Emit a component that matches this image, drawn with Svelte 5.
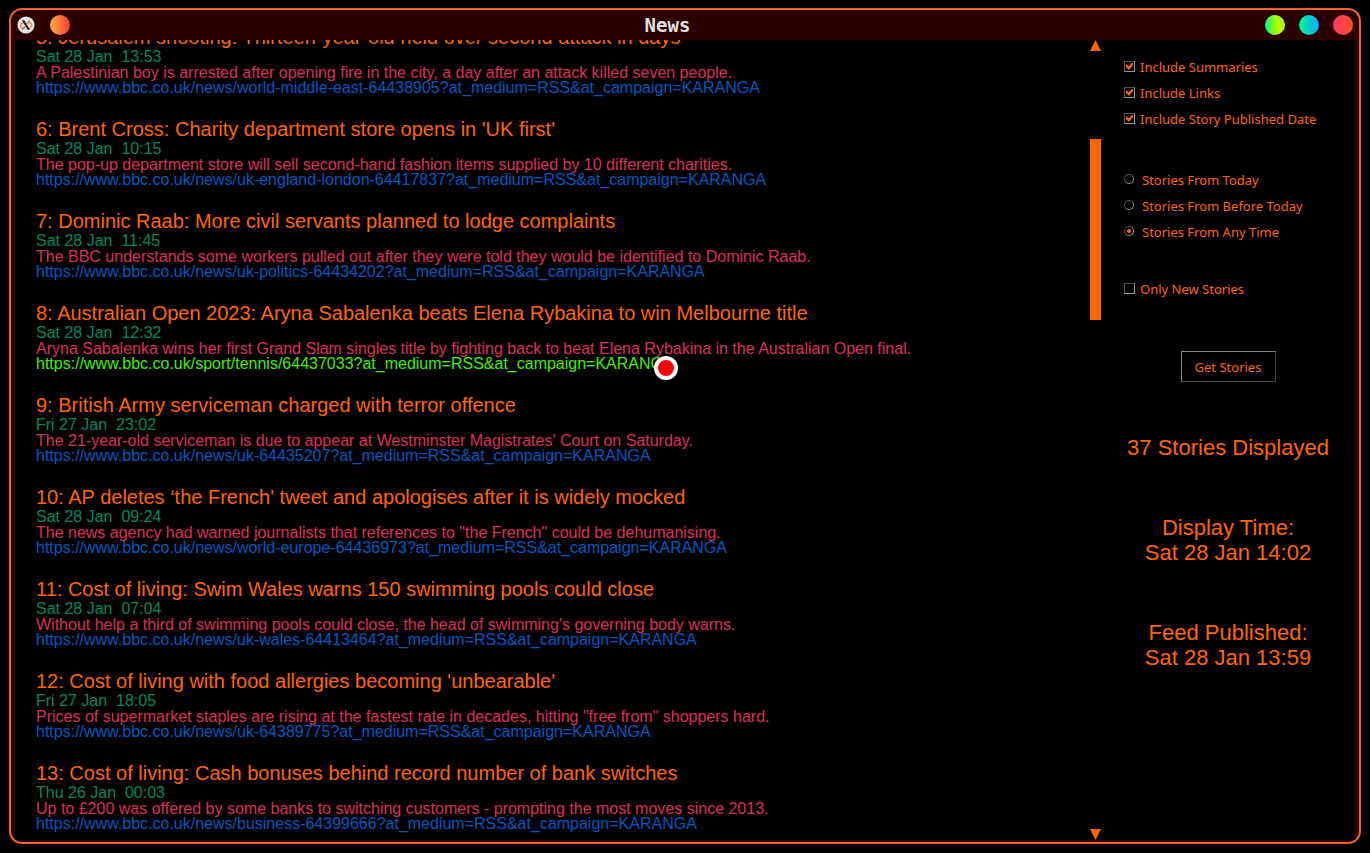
<script>
  const stories = [
    { n: 5, title: 'Jerusalem shooting: Thirteen-year-old held over second attack in days', date: 'Sat 28 Jan  13:53', summary: 'A Palestinian boy is arrested after opening fire in the city, a day after an attack killed seven people.', path: 'news/world-middle-east-64438905' },
    { n: 6, title: "Brent Cross: Charity department store opens in 'UK first'", date: 'Sat 28 Jan  10:15', summary: 'The pop-up department store will sell second-hand fashion items supplied by 10 different charities.', path: 'news/uk-england-london-64417837' },
    { n: 7, title: 'Dominic Raab: More civil servants planned to lodge complaints', date: 'Sat 28 Jan  11:45', summary: 'The BBC understands some workers pulled out after they were told they would be identified to Dominic Raab.', path: 'news/uk-politics-64434202' },
    { n: 8, title: 'Australian Open 2023: Aryna Sabalenka beats Elena Rybakina to win Melbourne title', date: 'Sat 28 Jan  12:32', summary: 'Aryna Sabalenka wins her first Grand Slam singles title by fighting back to beat Elena Rybakina in the Australian Open final.', path: 'sport/tennis/64437033', hovered: true },
    { n: 9, title: 'British Army serviceman charged with terror offence', date: 'Fri 27 Jan  23:02', summary: "The 21-year-old serviceman is due to appear at Westminster Magistrates' Court on Saturday.", path: 'news/uk-64435207' },
    { n: 10, title: "AP deletes ‘the French' tweet and apologises after it is widely mocked", date: 'Sat 28 Jan  09:24', summary: 'The news agency had warned journalists that references to "the French" could be dehumanising.', path: 'news/world-europe-64436973' },
    { n: 11, title: 'Cost of living: Swim Wales warns 150 swimming pools could close', date: 'Sat 28 Jan  07:04', summary: "Without help a third of swimming pools could close, the head of swimming's governing body warns.", path: 'news/uk-wales-64413464' },
    { n: 12, title: "Cost of living with food allergies becoming 'unbearable'", date: 'Fri 27 Jan  18:05', summary: 'Prices of supermarket staples are rising at the fastest rate in decades, hitting "free from" shoppers hard.', path: 'news/uk-64389775' },
    { n: 13, title: 'Cost of living: Cash bonuses behind record number of bank switches', date: 'Thu 26 Jan  00:03', summary: 'Up to £200 was offered by some banks to switching customers - prompting the most moves since 2013.', path: 'news/business-64399666' }
  ];
  const url = (path) => `https://www.bbc.co.uk/${path}?at_medium=RSS&at_campaign=KARANGA`;

  let includes = $state([
    { label: 'Include Summaries', on: true },
    { label: 'Include Links', on: true },
    { label: 'Include Story Published Date', on: true }
  ]);
  const periods = ['Stories From Today', 'Stories From Before Today', 'Stories From Any Time'];
  let period = $state('Stories From Any Time');
  let onlyNew = $state(false);

  const scroll = { before: 88, thumb: 181, after: 509 };
</script>

<div class="window">
  <header>
    <div class="group">
      <button class="logo" aria-label="Window menu">
        <svg viewBox="0 0 18 18" width="18" height="18">
          <circle cx="9" cy="9" r="8.6" fill="#e2e6e8" />
          <path d="M7.4 6.6C4.6 7 3.2 8.6 3.6 10.4c.4 1.8 2.6 2.4 4.6 1.4M10.4 12.2c2.6.2 4.4-1.2 4.3-3.4-.1-1.8-1.6-2.6-3.2-2.2" fill="none" stroke="#f08a58" stroke-width="1.3" />
          <path d="M4.8 4.2h2.5l5.8 9.6h-2.5z" fill="#2a2a2a" />
          <path d="M12.8 4.2 9.9 7.9M8 10.2l-2.9 3.6" stroke="#555" stroke-width="0.9" />
        </svg>
      </button>
      <button class="dot amber" aria-label="Stick"></button>
    </div>
    <h1>News</h1>
    <div class="group right">
      <button class="dot lime" aria-label="Minimise"></button>
      <button class="dot aqua" aria-label="Maximise"></button>
      <button class="dot red" aria-label="Close"></button>
    </div>
  </header>

  <main>
    <section class="feed" aria-label="Stories">
      <div class="stories">
        {#each stories as s (s.n)}
          <article>
            <h2>{s.n}: {s.title}</h2>
            <time>{s.date}</time>
            <p>{s.summary}</p>
            <a class:hovered={s.hovered} href={url(s.path)}>{url(s.path)}{#if s.hovered}<span class="pointer"></span>{/if}</a>
          </article>
        {/each}
      </div>
    </section>

    <div class="scrollbar">
      <button aria-label="Scroll up"><svg viewBox="0 0 11 11" width="11" height="11"><path d="M5.5 0 11 11H0z" fill="#ff6600" /></svg></button>
      <div class="track">
        <div style:flex-grow={scroll.before}></div>
        <div class="thumb" style:flex-grow={scroll.thumb}></div>
        <div style:flex-grow={scroll.after}></div>
      </div>
      <button aria-label="Scroll down"><svg viewBox="0 0 11 11" width="11" height="11"><path d="M0 0h11L5.5 11z" fill="#ff6600" /></svg></button>
    </div>

    <aside>
      <div class="options">
        {#each includes as item}
          <label><input type="checkbox" bind:checked={item.on} />{item.label}</label>
        {/each}
      </div>
      <div class="options radios">
        {#each periods as p}
          <label><input type="radio" name="period" value={p} bind:group={period} />{p}</label>
        {/each}
      </div>
      <div class="options">
        <label><input type="checkbox" bind:checked={onlyNew} />Only New Stories</label>
      </div>
      <button class="get">Get Stories</button>
      <div class="info">
        <p>37 Stories Displayed</p>
        <p>Display Time:<br />Sat 28 Jan 14:02</p>
        <p>Feed Published:<br />Sat 28 Jan 13:59</p>
      </div>
    </aside>
  </main>
</div>

<style>
  :global(body) {
    background: #000;
  }
  :global(#app) {
    height: 100vh;
    box-sizing: border-box;
    padding: 8px 9px 9px;
  }
  * {
    box-sizing: border-box;
    margin: 0;
  }
  button {
    padding: 0;
    border: 0;
    background: none;
  }
  .window {
    height: 100%;
    display: flex;
    flex-direction: column;
    padding: 0 4px 2px;
    border: 2px solid #f4622a;
    border-radius: 13px;
    background: #2a0000;
    color: #ff6600;
    font-family: "Liberation Sans", Arial, sans-serif;
    overflow: hidden;
  }
  header {
    flex: none;
    height: 30px;
    display: grid;
    grid-template-columns: auto 1fr auto;
    align-items: center;
    padding: 0 2px;
  }
  .group {
    display: flex;
    align-items: center;
    gap: 15px;
  }
  .right {
    gap: 14px;
  }
  .logo {
    width: 18px;
    height: 18px;
  }
  svg {
    display: block;
  }
  h1 {
    color: #e0e0e0;
    font: bold 19px/30px "DejaVu Sans Mono", monospace;
    text-align: center;
  }
  .dot {
    width: 20px;
    height: 20px;
    border-radius: 50%;
  }
  .amber { background: linear-gradient(90deg, #ffb040, #f83a30); }
  .lime { background: linear-gradient(90deg, #00ff88, #b0ff00 60%); }
  .aqua { background: linear-gradient(90deg, #00f890, #00a8ff); }
  .red { background: linear-gradient(90deg, #ff3a6c, #ff5020); }
  main {
    flex: 1;
    min-height: 0;
    display: grid;
    grid-template-columns: 1fr 11px 254px;
    background: #000;
  }
  .feed {
    min-height: 0;
    padding-left: 21px;
    overflow: hidden;
  }
  .stories {
    display: flex;
    flex-direction: column;
    gap: 23px;
    margin-top: -14px;
    white-space: pre;
  }
  article {
    display: flex;
    flex-direction: column;
    align-items: flex-start;
    font-size: 16px;
    line-height: 16px;
  }
  h2 {
    font-size: 20px;
    font-weight: normal;
    line-height: 23px;
  }
  time {
    color: #008860;
  }
  article p {
    color: #dc2f58;
  }
  a {
    position: relative;
    color: #0058c0;
    line-height: 14px;
    text-decoration: none;
  }
  .hovered {
    color: #44ee00;
  }
  .pointer {
    position: absolute;
    right: -4px;
    top: -1px;
    width: 24px;
    height: 24px;
    border: 4px solid #fff;
    border-radius: 50%;
    background: #f00;
  }
  .scrollbar {
    display: flex;
    flex-direction: column;
  }
  .track {
    flex: 1;
    display: flex;
    flex-direction: column;
  }
  .thumb {
    background: #ff6600;
  }
  aside {
    display: flex;
    flex-direction: column;
    padding-top: 14px;
  }
  .options {
    margin-bottom: 31px;
    padding-left: 23px;
    font-family: "Noto Sans", sans-serif;
    font-size: 13px;
  }
  .radios {
    margin-top: 4px;
  }
  label {
    display: flex;
    align-items: center;
    gap: 5px;
    height: 26px;
  }
  .radios label {
    gap: 8px;
  }
  input {
    appearance: none;
    display: grid;
    place-items: center;
    width: 11px;
    height: 11px;
    margin: 0 0 2px;
    border: 1px solid;
    border-color: #555 #999 #999 #555;
  }
  input[type="radio"] {
    width: 10px;
    height: 10px;
    border-radius: 50%;
  }
  input:checked::before {
    content: "";
    width: 7px;
    height: 7px;
    background: #ff6600;
    clip-path: polygon(0 28%, 14% 28%, 40% 56%, 88% 0, 100% 0, 100% 32%, 50% 100%, 34% 100%, 0 62%);
  }
  input[type="radio"]:checked::before {
    width: 4px;
    height: 4px;
    clip-path: circle(50%);
  }
  .get {
    align-self: center;
    width: 95px;
    height: 31px;
    margin: 18px 0 53px;
    border: 1px solid;
    border-color: #888 #444 #444 #888;
    color: #ff6600;
    font: 13px "Noto Sans", sans-serif;
  }
  .info {
    display: flex;
    flex-direction: column;
    gap: 55px;
    text-align: center;
    font-size: 22px;
    line-height: 25px;
  }
</style>
